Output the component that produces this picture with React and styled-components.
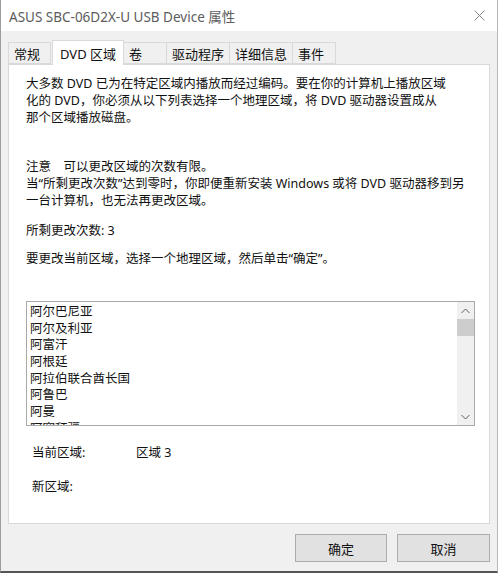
import React from 'react';
import styled, { createGlobalStyle } from 'styled-components';

const GlobalStyle = createGlobalStyle`
  html, body {
    margin: 0;
    padding: 0;
    background: #ffffff;
  }
  body {
    font-family: "Noto Sans", "Noto Sans CJK SC", sans-serif;
  }
`;

const Window = styled.div`
  width: 496px;
  height: 571px;
  background: #f0f0f0;
  border-left: 1px solid #9c9c9c;
  border-right: 1px solid #b8b8b8;
  border-bottom: 2px solid #555;
  display: flex;
  flex-direction: column;
  font-size: 12.5px;
  color: #111;
`;

const TitleBar = styled.div`
  height: 31px;
  background: #fff;
  display: flex;
  align-items: center;
  justify-content: space-between;
  padding: 0 12px 0 8px;
  font-size: 13.5px;
  color: #5c5c5c;
`;

const Body = styled.div`
  flex: 1;
  padding: 9px 7px 0 7px;
  display: flex;
  flex-direction: column;
`;

const TabRow = styled.div`
  display: flex;
  align-items: flex-end;
  height: 24px;
  position: relative;
  z-index: 1;
`;

const Tab = styled.div`
  height: ${({ active }) => (active ? '25px' : '22px')};
  min-width: 43px;
  box-sizing: border-box;
  padding: ${({ active }) => (active ? '0 7px 0 7px' : '0 5px 0 5px')};
  margin-left: ${({ active }) => (active ? '1px' : '0')};
  margin-bottom: ${({ active }) => (active ? '-1px' : '0')};
  background: ${({ active }) => (active ? '#fff' : '#f0f0f0')};
  border: 1px solid #d9d9d9;
  border-bottom: ${({ active }) => (active ? 'none' : '1px solid #d9d9d9')};
  border-left: ${({ first, active }) => (first || active ? '1px solid #d9d9d9' : 'none')};
  display: flex;
  align-items: center;
  white-space: nowrap;
  color: #111;
  font-size: 13px;
  position: relative;
  z-index: ${({ active }) => (active ? 2 : 1)};
`;

const Panel = styled.div`
  height: 460px;
  background: #fff;
  border: 1px solid #d9d9d9;
  box-sizing: border-box;
  padding: 10px 14px 0 17px;
  display: flex;
  flex-direction: column;
`;

const Para = styled.p`
  margin: ${({ top }) => top || 0}px 0 0 0;
  line-height: 17px;
`;

const ListBox = styled.div`
  margin-top: 34px;
  height: 125px;
  border: 1px solid #a9a9a9;
  box-sizing: border-box;
  display: flex;
  overflow: hidden;
`;

const ListItems = styled.div`
  flex: 1;
  padding: 2px 0 0 3px;
`;

const ListItem = styled.div`
  height: 16.7px;
  line-height: 16.7px;
  white-space: nowrap;
`;

const ScrollBar = styled.div`
  width: 17px;
  background: #f0f0f0;
  display: flex;
  flex-direction: column;
  align-items: center;
`;

const ScrollArrow = styled.div`
  height: 17px;
  width: 17px;
  display: flex;
  align-items: center;
  justify-content: center;
`;

const ScrollThumb = styled.div`
  width: 17px;
  height: 17px;
  background: #cdcdcd;
`;

const ScrollTrack = styled.div`
  flex: 1;
`;

const InfoRow = styled.div`
  display: flex;
  margin: ${({ top }) => top}px 0 0 6px;
  line-height: 17px;
`;

const InfoLabel = styled.span`
  width: 104px;
`;

const ButtonRow = styled.div`
  display: flex;
  justify-content: flex-end;
  gap: 10px;
  margin-top: 10px;
`;

const Button = styled.div`
  width: ${({ w }) => w}px;
  height: 28px;
  box-sizing: border-box;
  background: #e1e1e1;
  border: 1px solid #adadad;
  display: flex;
  align-items: center;
  justify-content: center;
  font-size: 13px;
  color: #111;
`;

const countries = [
  '阿尔巴尼亚',
  '阿尔及利亚',
  '阿富汗',
  '阿根廷',
  '阿拉伯联合酋长国',
  '阿鲁巴',
  '阿曼',
  '阿塞拜疆',
];

const tabs = ['常规', 'DVD 区域', '卷', '驱动程序', '详细信息', '事件'];

const Chevron = ({ up }) => (
  <svg width="9" height="6" viewBox="0 0 9 6">
    <path
      d={up ? 'M0.5 5 L4.5 1 L8.5 5' : 'M0.5 1 L4.5 5 L8.5 1'}
      fill="none"
      stroke="#606060"
      strokeWidth="1"
    />
  </svg>
);

const CloseIcon = () => (
  <svg width="11" height="11" viewBox="0 0 11 11">
    <path d="M0.5 0.5 L10.5 10.5 M10.5 0.5 L0.5 10.5" stroke="#8a8a8a" strokeWidth="1" />
  </svg>
);

export default function App() {
  return (
    <>
      <GlobalStyle />
      <Window>
        <TitleBar>
          <span>ASUS SBC-06D2X-U USB Device 属性</span>
          <CloseIcon />
        </TitleBar>
        <Body>
          <TabRow>
            {tabs.map((t, i) => (
              <Tab key={t} active={i === 1} first={i === 0}>
                {t}
              </Tab>
            ))}
          </TabRow>
          <Panel>
            <Para>
              大多数 DVD 已为在特定区域内播放而经过编码。要在你的计算机上播放区域
              <br />
              化的 DVD，你必须从以下列表选择一个地理区域，将 DVD 驱动器设置成从
              <br />
              那个区域播放磁盘。
            </Para>
            <Para top={32}>注意　可以更改区域的次数有限。</Para>
            <Para>
              当“所剩更改次数”达到零时，你即便重新安装 Windows 或将 DVD 驱动器移到另
              <br />
              一台计算机，也无法再更改区域。
            </Para>
            <Para top={13}>所剩更改次数: 3</Para>
            <Para top={11}>要更改当前区域，选择一个地理区域，然后单击“确定”。</Para>
            <ListBox>
              <ListItems>
                {countries.map((c) => (
                  <ListItem key={c}>{c}</ListItem>
                ))}
              </ListItems>
              <ScrollBar>
                <ScrollArrow>
                  <Chevron up />
                </ScrollArrow>
                <ScrollThumb />
                <ScrollTrack />
                <ScrollArrow>
                  <Chevron />
                </ScrollArrow>
              </ScrollBar>
            </ListBox>
            <InfoRow top={18}>
              <InfoLabel>当前区域:</InfoLabel>
              <span>区域 3</span>
            </InfoRow>
            <InfoRow top={17}>
              <InfoLabel>新区域:</InfoLabel>
            </InfoRow>
          </Panel>
          <ButtonRow>
            <Button w={92}>确定</Button>
            <Button w={93}>取消</Button>
          </ButtonRow>
        </Body>
      </Window>
    </>
  );
}
